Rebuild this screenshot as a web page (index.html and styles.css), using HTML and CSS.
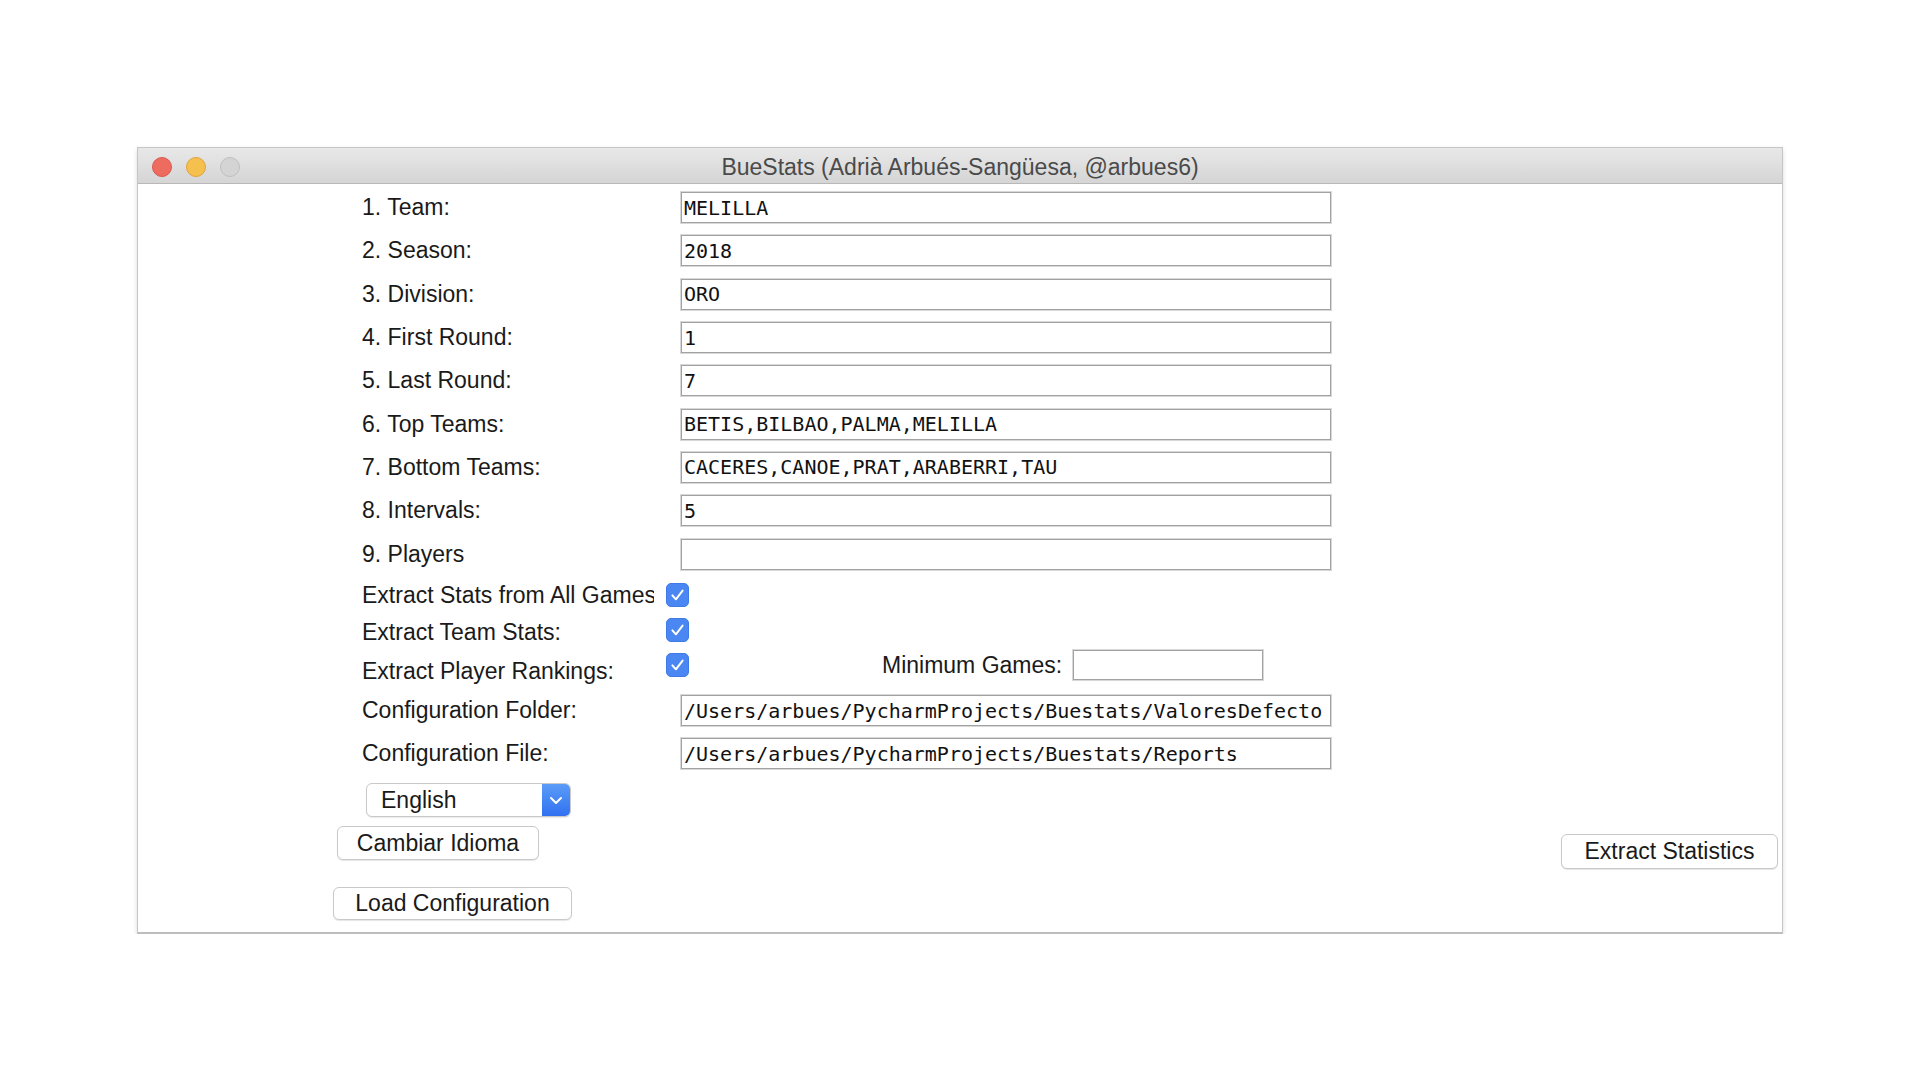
FILE: index.html
```html
<!DOCTYPE html>
<html lang="en">
<head>
<meta charset="utf-8">
<title>BueStats</title>
<link rel="stylesheet" href="styles.css">
</head>
<body>
<div class="stage">
  <div class="window">
    <div class="titlebar">
      <div class="lights">
        <span class="light red"></span>
        <span class="light yellow"></span>
        <span class="light gray"></span>
      </div>
      <div class="title">BueStats (Adrià Arbués-Sangüesa, @arbues6)</div>
      <div></div>
    </div>
    <div class="content">
      <div class="rows">
        <div class="row"><span class="lbl">1. Team:</span><input class="entry" type="text" value="MELILLA" readonly></div>
        <div class="row"><span class="lbl">2. Season:</span><input class="entry" type="text" value="2018" readonly></div>
        <div class="row"><span class="lbl">3. Division:</span><input class="entry" type="text" value="ORO" readonly></div>
        <div class="row"><span class="lbl">4. First Round:</span><input class="entry" type="text" value="1" readonly></div>
        <div class="row"><span class="lbl">5. Last Round:</span><input class="entry" type="text" value="7" readonly></div>
        <div class="row"><span class="lbl">6. Top Teams:</span><input class="entry" type="text" value="BETIS,BILBAO,PALMA,MELILLA" readonly></div>
        <div class="row"><span class="lbl">7. Bottom Teams:</span><input class="entry" type="text" value="CACERES,CANOE,PRAT,ARABERRI,TAU" readonly></div>
        <div class="row"><span class="lbl">8. Intervals:</span><input class="entry" type="text" value="5" readonly></div>
        <div class="row"><span class="lbl">9. Players</span><input class="entry" type="text" value="" readonly></div>
      </div>
      <div class="checks">
        <div class="crow">
          <span class="clbl">Extract Stats from All Games</span>
          <svg class="cbox" width="23" height="24" viewBox="0 0 23 24"><rect x="0.5" y="0.5" width="22" height="23" rx="4.5" fill="#4b87f2" stroke="#3f7be8"/><path d="M6.4 12.4 L9.9 16.3 L16.6 7.6" fill="none" stroke="#fff" stroke-width="2" stroke-linecap="round" stroke-linejoin="round"/></svg>
        </div>
        <div class="crow">
          <span class="clbl team">Extract Team Stats:</span>
          <svg class="cbox" width="23" height="24" viewBox="0 0 23 24"><rect x="0.5" y="0.5" width="22" height="23" rx="4.5" fill="#4b87f2" stroke="#3f7be8"/><path d="M6.4 12.4 L9.9 16.3 L16.6 7.6" fill="none" stroke="#fff" stroke-width="2" stroke-linecap="round" stroke-linejoin="round"/></svg>
        </div>
        <div class="crow">
          <span class="clbl rank">Extract Player Rankings:</span>
          <svg class="cbox" width="23" height="24" viewBox="0 0 23 24"><rect x="0.5" y="0.5" width="22" height="23" rx="4.5" fill="#4b87f2" stroke="#3f7be8"/><path d="M6.4 12.4 L9.9 16.3 L16.6 7.6" fill="none" stroke="#fff" stroke-width="2" stroke-linecap="round" stroke-linejoin="round"/></svg>
          <span class="mglbl">Minimum Games:</span>
          <input class="entry small" type="text" value="" readonly>
        </div>
      </div>
      <div class="config">
        <div class="row crow2"><span class="lbl">Configuration Folder:</span><input class="entry" type="text" value="/Users/arbues/PycharmProjects/Buestats/ValoresDefecto" readonly></div>
        <div class="row crow2"><span class="lbl">Configuration File:</span><input class="entry" type="text" value="/Users/arbues/PycharmProjects/Buestats/Reports" readonly></div>
      </div>
    </div>
    <div class="bottom">
      <div class="leftcol">
        <div class="select">
          <span class="seltext">English</span>
          <span class="selarrow"><svg width="28" height="34" viewBox="0 0 28 34"><path d="M9 15 L14 20 L19 15" fill="none" stroke="#fff" stroke-width="2" stroke-linecap="round" stroke-linejoin="round"/></svg></span>
        </div>
        <button class="btn cambiar" type="button">Cambiar Idioma</button>
        <button class="btn load" type="button">Load Configuration</button>
      </div>
      <button class="btn extract" type="button">Extract Statistics</button>
    </div>
  </div>
</div>
</body>
</html>
```
FILE: styles.css
```css
html, body {
  margin: 0;
  padding: 0;
  background: #ffffff;
}

body {
  font-family: "Liberation Sans", Arial, sans-serif;
  color: #1a1a1a;
}

.stage {
  padding: 148px 0 0 138px;
}

.window {
  width: 1644px;
  height: 784px;
  background: #ffffff;
  border-bottom: 2px solid #bdbdbd;
  box-shadow: 0 0 0 1px #c6c6c6, 0 2px 5px rgba(0, 0, 0, 0.22);
  display: flex;
  flex-direction: column;
}

.titlebar {
  height: 35px;
  border-bottom: 1px solid #b8b8b8;
  background: linear-gradient(#e8e8e8, #d5d5d5);
  display: grid;
  grid-template-columns: 1fr auto 1fr;
  align-items: center;
}

.lights {
  display: flex;
  gap: 14px;
  padding: 3px 0 0 14px;
}

.light {
  width: 20px;
  height: 20px;
  border-radius: 50%;
  box-sizing: border-box;
}

.light.red {
  background: #ee6b60;
  border: 1px solid #d9574c;
}

.light.yellow {
  background: #f6c04f;
  border: 1px solid #dea33a;
}

.light.gray {
  background: #d4d4d4;
  border: 1px solid #bfbfbf;
}

.title {
  font-size: 23px;
  color: #4a4a4a;
  white-space: nowrap;
  padding-top: 3px;
}

.content {
  padding: 2px 0 0 224px;
}

.row {
  display: flex;
  align-items: center;
  height: 43.3px;
}

.lbl {
  width: 319px;
  flex: none;
  font-size: 23px;
  white-space: nowrap;
}

.entry {
  width: 650px;
  height: 31px;
  box-sizing: border-box;
  margin: 0;
  padding: 0 0 0 2px;
  border: 1px solid #a2a2a2;
  box-shadow: 0 0 0 1px #d8d8d8;
  border-radius: 0;
  background: #ffffff;
  font-family: "DejaVu Sans Mono", "Liberation Mono", monospace;
  font-size: 20px;
  color: #111111;
  outline: none;
}

.entry.small {
  width: 190px;
  height: 30px;
}

.checks {
  margin-top: 2px;
}

.crow {
  display: flex;
  align-items: center;
  height: 35px;
}

.clbl {
  width: 292px;
  margin-right: 12px;
  overflow: hidden;
  white-space: nowrap;
  font-size: 23px;
  flex: none;
}

.clbl.team {
  padding-top: 5px;
}

.clbl.rank {
  padding-top: 13px;
}

.cbox {
  flex: none;
  display: block;
}

.mglbl {
  width: 191px;
  margin-left: 193px;
  padding-right: 13px;
  box-sizing: border-box;
  margin-right: -13px;
  text-align: right;
  font-size: 23px;
  white-space: nowrap;
  flex: none;
}

.mglbl + .entry {
  margin-left: 13px;
}

.config {
  margin-top: 6.5px;
}

.crow2 {
  height: 43px;
}

.bottom {
  display: flex;
  align-items: flex-start;
  padding: 8px 4px 0 195px;
}

.leftcol {
  display: flex;
  flex-direction: column;
  align-items: flex-start;
}

.select {
  margin-left: 33px;
  width: 205px;
  height: 34px;
  box-sizing: border-box;
  border: 1px solid #c9c9c9;
  border-radius: 6px;
  background: #ffffff;
  box-shadow: 0 1px 1px rgba(0, 0, 0, 0.08);
  display: flex;
  align-items: center;
  overflow: hidden;
}

.seltext {
  flex: 1;
  padding-left: 14px;
  font-size: 23px;
}

.selarrow {
  width: 28px;
  height: 34px;
  background: linear-gradient(#5d9ef8, #2f6ff0);
  display: flex;
}

.btn {
  margin: 0;
  padding: 0;
  box-sizing: border-box;
  border: 1px solid #c9c9c9;
  border-radius: 6px;
  background: #ffffff;
  box-shadow: 0 1px 1px rgba(0, 0, 0, 0.1);
  font-family: "Liberation Sans", Arial, sans-serif;
  font-size: 23px;
  color: #1a1a1a;
  text-align: center;
}

.btn.cambiar {
  margin-top: 9px;
  margin-left: 4px;
  width: 202px;
  height: 34px;
}

.btn.load {
  margin-top: 27px;
  width: 239px;
  height: 33px;
}

.btn.extract {
  margin-left: auto;
  margin-top: 51px;
  width: 217px;
  height: 35px;
}
```
